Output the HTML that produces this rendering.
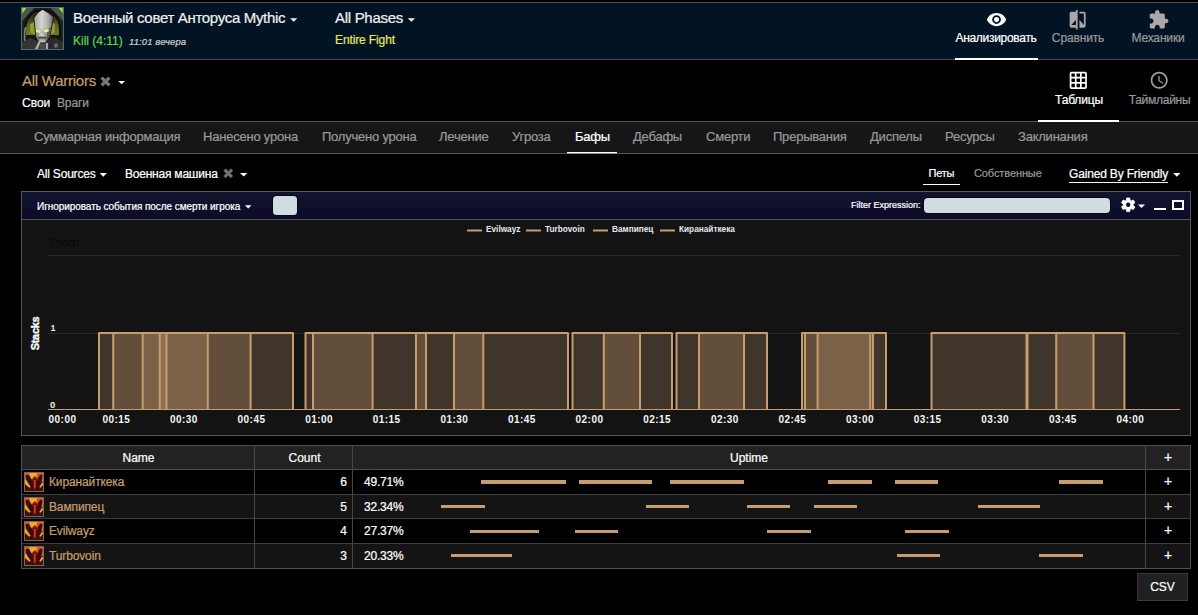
<!DOCTYPE html>
<html style="background:#000">
<head>
<meta charset="utf-8">
<title>Report</title>
<style>
*{box-sizing:border-box;margin:0;padding:0}
html,body{width:1198px;height:615px;overflow:hidden;background:#000}
body{font-family:"Liberation Sans",sans-serif;color:#fff;position:relative;font-size:12px;-webkit-text-stroke:0.22px}
.abs{position:absolute;white-space:nowrap;line-height:1}
.caret{display:inline-block;width:7.300px;height:3.600px;background:currentColor;clip-path:polygon(0 0,100% 0,50% 100%);vertical-align:middle}
#topbar{position:absolute;left:0;top:2px;width:1198px;height:58px;background:linear-gradient(#050e18 0,#021323 2px,#021323 100%);border-top:1px solid #4d5058;border-bottom:1px solid #4a4c52}
#sec2{position:absolute;left:0;top:60px;width:1198px;height:62px;background:#000;border-bottom:1px solid #565656}
#tabbar{position:absolute;left:0;top:122px;width:1198px;height:32px;background:#161616;border-bottom:1px solid #565656}
.tab{position:absolute;top:129px;font-size:13px;color:#999;white-space:nowrap;line-height:16px;letter-spacing:-0.22px}
#panel{position:absolute;left:21px;top:191px;width:1170px;height:245px;border:1px solid #58585c;border-top-color:#5a5a64;background:#131313}
#phead{position:absolute;left:0;top:0;width:1168px;height:28px;background:linear-gradient(#12142f,#0c0b27);border-bottom:1px solid #55555f}
.tbl{position:absolute;left:21px;top:445px;width:1170px;height:124px;border:1px solid #505050}
.row{position:absolute;left:0;width:1168px}
.vline{position:absolute;top:0;width:1px;height:122px;background:#464646}
.hline{position:absolute;left:0;width:1168px;height:1px;background:#404040}
.nm{position:absolute;left:27px;font-size:12px;color:#c79c6e;white-space:nowrap;line-height:14px;letter-spacing:-0.13px}
.cnt{position:absolute;left:234px;width:91px;text-align:right;font-size:12px;line-height:14px}
.pct{position:absolute;left:342px;font-size:12px;line-height:14px;letter-spacing:-0.2px}
.plus{position:absolute;left:1124px;width:44px;text-align:center;font-size:14px;line-height:14px}
.ub{position:absolute;height:4px;background:#c79c6e}
</style>
</head>
<body>

<!-- top bar -->
<div id="topbar"></div>
<svg class="abs" style="left:21px;top:7px" width="43" height="43" viewBox="0 0 43 43">
  <defs>
    <filter id="bl" x="-10%" y="-10%" width="120%" height="120%"><feGaussianBlur stdDeviation="0.650"/></filter>
    <clipPath id="bc"><rect x="1" y="1" width="41" height="41"/></clipPath>
    <linearGradient id="hd" x1="0" y1="0" x2="1" y2="0"><stop offset="0" stop-color="#a3a7a2"/><stop offset="0.400" stop-color="#d4d8d2"/><stop offset="0.750" stop-color="#a9aca8"/><stop offset="1" stop-color="#6a6770"/></linearGradient>
    <linearGradient id="ar" x1="0" y1="0" x2="0" y2="1"><stop offset="0" stop-color="#35240f"/><stop offset="0.300" stop-color="#453616"/><stop offset="0.550" stop-color="#5a6420"/><stop offset="1" stop-color="#6e8028"/></linearGradient>
    <linearGradient id="fc" x1="0" y1="0" x2="0" y2="1"><stop offset="0" stop-color="#000" stop-opacity="0"/><stop offset="0.550" stop-color="#000" stop-opacity="0"/><stop offset="1" stop-color="#000" stop-opacity="0.450"/></linearGradient>
  </defs>
  <rect x="0" y="0" width="43" height="43" fill="#2a322e"/>
  <g clip-path="url(#bc)"><g filter="url(#bl)">
    <rect x="0" y="0" width="43" height="43" fill="#1c211c"/><path d="M0 0 h14 L0 15z M43 0 h-14 L43 15z" fill="#4a5a4e"/>
    <path d="M0 0 h6 l-4.500 6 h-1.500z" fill="#8fc21e"/>
    <path d="M43 0 h-6 l4.500 6 h1.500z" fill="#8fc21e"/>
    <path d="M2.500 1 l2.500 0 l-3 4z M40.500 1 l-2.500 0 l3 4z" fill="#b4e040"/>
    <path d="M3 43 L3 22 C3.500 9 11 2 21.500 2 C32 2 39.500 9 40 22 L40 43 Z" fill="#0c0e0a"/>
    <path d="M5 30 L5 22 C5.500 11 12 4 21.500 4 C31 4 37.500 11 38 22 L38 30 Z" fill="url(#ar)"/>
    <path d="M6 28 L14 28 L14 43 L3 43 L3 30 Z M37 28 L29 28 L29 43 L40 43 L40 30Z" fill="#16180f"/>
    <path d="M9 17 L13.500 15 L14 27.500 L9.500 25.500 Z" fill="#8da234"/>
    <path d="M34 17 L29.500 15 L29 27.500 L33.500 25.500 Z" fill="#8da234"/>
    <path d="M4.500 20 C3 27 3.500 36 6.500 42" fill="none" stroke="#6e8486" stroke-width="1.600"/>
    <path d="M0 43 L0 36 L9 31 L16 33.500 L27 33.500 L34 31 L43 36 L43 43 Z" fill="#343635"/>
    <path d="M28 29 L31 31 L31 43 L27.500 43 Z" fill="#2a2230"/>
    <path d="M31 32 L41 35 L41 43 L31 43 Z" fill="#2b2d2c"/>
    <path d="M33 37 l3 -1 l1 4 l-3 1z" fill="#6b6d66"/>
    <path d="M16.500 5 L21.500 1.800 L27.500 5 L33 9.500 L32 16 L30.800 22 L29 30 L25.500 36 L17.500 36 L14.200 30 L13.500 22 L12.300 10.500 Z" fill="#14140c" opacity="0.850"/>
    <path d="M17 6 L21.500 2.800 L27 6 L32 10 L31 16 L29.800 22 L28 30 L25 35 L18 35 L15.200 30 L14.500 22 L13.300 11 Z" fill="url(#hd)"/>
    <path d="M17 6 L21.500 2.800 L27 6 L32 10 L31 16 L29.800 22 L28 30 L25 35 L18 35 L15.200 30 L14.500 22 L13.300 11 Z" fill="url(#fc)"/>
    <path d="M26.500 22 L30 20 L28 30 L25.500 34 Z" fill="#4d4754" opacity="0.800"/>
    <path d="M14.800 22.300 l5 1.300 l-0.800 2.300 l-4 -0.900z" fill="#dff07a"/>
    <path d="M27.800 21.800 l-5 1.500 l0.900 2.300 l4 -1z" fill="#e6f2a0"/>
    <path d="M19 26 h3.500 l1.200 3 h-5.700z" fill="#c4c8c4"/>
    <path d="M17.500 30 h7.500 v1.300 h-7.500z" fill="#3e4142"/>
    <path d="M18.500 32.500 h5.500 l0.800 3 h-7z" fill="#b4b9b4"/>
    <path d="M17.500 34.500 L19.500 35.500 L16.500 43 L13.500 43 Z M25 36 L27 36 L27 43 L25 43 Z" fill="#a8aca6"/>
    <path d="M19 37 h6 v6 h-6z" fill="#4a4c50"/>
  </g></g>
  <rect x="0.500" y="0.500" width="42" height="42" fill="none" stroke="#5c666c"/>
</svg>
<div class="abs" style="left:73px;top:10px;font-size:15px;color:#f0f0f0;letter-spacing:-0.32px">Военный совет Анторуса Mythic <span class="caret" style="margin-left:1px;position:relative;top:1px"></span></div>
<div class="abs" style="left:73px;top:35px;font-size:12px;color:#5fd94a">Kill (4:11)</div>
<div class="abs" style="left:129px;top:37px;font-size:9.500px;color:#d0d0d0;font-style:italic;letter-spacing:0.1px">11:01 вечера</div>
<div class="abs" style="left:335px;top:10px;font-size:15px;color:#f0f0f0;letter-spacing:-0.3px">All Phases <span class="caret" style="margin-left:1px;position:relative;top:1px"></span></div>
<div class="abs" style="left:335px;top:34px;font-size:12px;color:#e6e85c;letter-spacing:-0.12px">Entire Fight</div>

<!-- top right nav -->
<svg class="abs" style="left:985.6px;top:8.9px" width="21.1" height="21.1" viewBox="0 0 24 24"><path fill="#fff" d="M12 4.500C7 4.500 2.730 7.610 1 12c1.730 4.390 6 7.500 11 7.500s9.270-3.110 11-7.500c-1.730-4.390-6-7.500-11-7.500zM12 17c-2.760 0-5-2.240-5-5s2.240-5 5-5 5 2.240 5 5-2.240 5-5 5zm0-8c-1.660 0-3 1.340-3 3s1.340 3 3 3 3-1.340 3-3-1.340-3-3-3z"/></svg>
<div class="abs" style="left:954px;top:32px;width:84px;text-align:center;font-size:12px;color:#fff;letter-spacing:-0.3px">Анализировать</div>
<div class="abs" style="left:955px;top:58px;width:83px;height:2px;background:#fff"></div>
<svg class="abs" style="left:1067.3px;top:9.1px" width="21.3" height="21.3" viewBox="0 0 24 24"><path fill="#a8a8a8" d="M10 3H5c-1.100 0-2 .9-2 2v14c0 1.100.9 2 2 2h5v2h2V1h-2v2zm0 15H5l5-6v6zm9-15h-5v2h5v13l-5-6v9h5c1.100 0 2-.9 2-2V5c0-1.100-.9-2-2-2z"/></svg>
<div class="abs" style="left:1038px;top:32px;width:80px;text-align:center;font-size:12px;color:#999;letter-spacing:-0.15px">Сравнить</div>
<svg class="abs" style="left:1147.9px;top:9.1px" width="21.3" height="21.3" viewBox="0 0 24 24"><path fill="#a8a8a8" d="M20.500 11H19V7c0-1.100-.9-2-2-2h-4V3.500C13 2.120 11.880 1 10.500 1S8 2.120 8 3.500V5H4c-1.100 0-1.990.9-1.990 2v3.800H3.500c1.490 0 2.700 1.210 2.700 2.700s-1.210 2.700-2.700 2.700H2V20c0 1.100.9 2 2 2h3.800v-1.500c0-1.490 1.210-2.700 2.700-2.700 1.490 0 2.700 1.210 2.700 2.700V22H17c1.100 0 2-.9 2-2v-4h1.500c1.380 0 2.500-1.120 2.500-2.500S21.880 11 20.500 11z"/></svg>
<div class="abs" style="left:1118px;top:32px;width:80px;text-align:center;font-size:12px;color:#999;letter-spacing:-0.15px">Механики</div>

<!-- second bar -->
<div id="sec2"></div>
<div class="abs" style="left:22px;top:73px;font-size:15px;color:#c79c6e;letter-spacing:-0.25px">All Warriors</div>
<svg class="abs" style="left:100px;top:76px" width="11" height="11" viewBox="0 0 11 11"><path d="M1.600 1.600 L9.400 9.400 M9.400 1.600 L1.600 9.400" stroke="#787878" stroke-width="3.300" stroke-linecap="butt"/></svg>
<div class="abs caret" style="left:118px;top:80.700px;color:#fff"></div>
<div class="abs" style="left:22px;top:97px;font-size:12px;color:#fff">Свои</div>
<div class="abs" style="left:57px;top:97px;font-size:12px;color:#999;letter-spacing:-0.15px">Враги</div>

<svg class="abs" style="left:1067.9px;top:70.0px" width="20.6" height="20.6" viewBox="0 0 24 24"><path fill="#fff" d="M20 2H4c-1.100 0-2 .9-2 2v16c0 1.100.9 2 2 2h16c1.100 0 2-.9 2-2V4c0-1.100-.9-2-2-2zM8 20H4v-4h4v4zm0-6H4v-4h4v4zm0-6H4V4h4v4zm6 12h-4v-4h4v4zm0-6h-4v-4h4v4zm0-6h-4V4h4v4zm6 12h-4v-4h4v4zm0-6h-4v-4h4v4zm0-6h-4V4h4v4z"/></svg>
<div class="abs" style="left:1039px;top:94px;width:80px;text-align:center;font-size:12px;color:#fff;letter-spacing:-0.15px">Таблицы</div>
<div class="abs" style="left:1038px;top:120px;width:81px;height:2px;background:#fff"></div>
<svg class="abs" style="left:1149.1px;top:70.0px" width="20.4" height="20.4" viewBox="0 0 24 24"><path fill="#a0a0a0" d="M11.990 2C6.470 2 2 6.480 2 12s4.470 10 9.990 10C17.520 22 22 17.520 22 12S17.520 2 11.990 2zM12 20c-4.420 0-8-3.580-8-8s3.580-8 8-8 8 3.580 8 8-3.580 8-8 8zm.5-13H11v6l5.250 3.150.75-1.230-4.500-2.670z"/></svg>
<div class="abs" style="left:1119.500px;top:94px;width:80px;text-align:center;font-size:12px;color:#999;letter-spacing:-0.27px">Таймлайны</div>

<!-- tab bar -->
<div id="tabbar"></div>
<div class="tab" style="left:34px">Суммарная информация</div>
<div class="tab" style="left:203px">Нанесено урона</div>
<div class="tab" style="left:322px">Получено урона</div>
<div class="tab" style="left:439px">Лечение</div>
<div class="tab" style="left:512px">Угроза</div>
<div class="tab" style="left:575px;color:#fff">Бафы</div>
<div class="abs" style="left:567px;top:152px;width:50px;height:2px;background:linear-gradient(#fff 0,#fff 1px,#8c8c8c 1px,#8c8c8c 2px)"></div>
<div class="tab" style="left:633px">Дебафы</div>
<div class="tab" style="left:706px">Смерти</div>
<div class="tab" style="left:773px">Прерывания</div>
<div class="tab" style="left:870px">Диспелы</div>
<div class="tab" style="left:945px">Ресурсы</div>
<div class="tab" style="left:1018px">Заклинания</div>

<!-- filter row -->
<div class="abs" style="left:37px;top:168px;font-size:12px;color:#fff;letter-spacing:-0.2px">All Sources <span class="caret" style="margin-left:1px"></span></div>
<div class="abs" style="left:125px;top:168px;font-size:12px;color:#fff;letter-spacing:-0.22px">Военная машина</div>
<svg class="abs" style="left:222.500px;top:167.700px" width="10.600" height="10.600" viewBox="0 0 11 11"><path d="M1.600 1.600 L9.400 9.400 M9.400 1.600 L1.600 9.400" stroke="#707070" stroke-width="3.300" stroke-linecap="butt"/></svg>
<div class="abs caret" style="left:240px;top:173px;color:#fff"></div>
<div class="abs" style="left:928.600px;top:168px;font-size:11px;color:#fff;letter-spacing:-0.3px">Петы</div>
<div class="abs" style="left:923px;top:184px;width:37px;height:1px;background:#fff"></div>
<div class="abs" style="left:974px;top:168px;font-size:11px;color:#999;letter-spacing:-0.1px">Собственные</div>
<div class="abs" style="left:1069px;top:168px;font-size:12px;color:#fff;letter-spacing:-0.17px">Gained By Friendly <span class="caret" style="margin-left:2px"></span></div>
<div class="abs" style="left:1069px;top:182px;width:99px;height:1px;background:#f4f4f4"></div>

<!-- chart panel -->
<div id="panel">
  <div id="phead"></div>
  <div class="abs" style="left:15px;top:9.600px;font-size:10px;color:#fff;letter-spacing:-0.06px">Игнорировать события после смерти игрока <span class="caret" style="width:6.500px;height:3.300px;margin-left:2px"></span></div>
  <div class="abs" style="left:251px;top:4px;width:24px;height:19px;background:#cfdde0;border-radius:3.500px;box-shadow:0 0 0 1px #06061c"></div>
  <div class="abs" style="left:829px;top:9px;font-size:9px;color:#fff">Filter Expression:</div>
  <div class="abs" style="left:902px;top:6px;width:186px;height:15px;background:#cfdde0;border-radius:4px;box-shadow:0 0 0 1px #06061c"></div>
  <svg class="abs" style="left:1096px;top:3px" width="32" height="20" viewBox="0 0 32 20"><g transform="translate(10.200,9.800)"><path d="M1.79 -4.67 L1.57 -6.82 L-1.57 -6.82 L-1.79 -4.67 L-3.15 -3.89 L-5.12 -4.77 L-6.69 -2.05 L-4.94 -0.78 L-4.94 0.78 L-6.69 2.05 L-5.12 4.77 L-3.15 3.89 L-1.79 4.67 L-1.57 6.82 L1.57 6.82 L1.79 4.67 L3.15 3.89 L5.12 4.77 L6.69 2.05 L4.94 0.78 L4.94 -0.78 L6.69 -2.05 L5.12 -4.77 L3.15 -3.89Z" fill="#fff" stroke="#fff" stroke-width="0.800" stroke-linejoin="round"/><circle r="2.200" fill="#0e0e2a"/></g><path d="M20 9.600 h7 l-3.500 3.500 z" fill="#fff"/></svg>
  <div class="abs" style="left:1132px;top:16px;width:12px;height:2px;background:#fff"></div>
  <div class="abs" style="left:1150px;top:8px;width:12px;height:10px;border:2px solid #fff"></div>

  <svg class="abs" style="left:0;top:28px" width="1168" height="215" viewBox="22 220 1168 215" id="chart">
<rect x="48" y="255" width="1132" height="1" fill="#2a2a2a"/>
<rect x="48" y="333" width="1132" height="1" fill="#2a2a2a"/>
<text x="48" y="247" font-size="12" fill="#090909" font-family="Liberation Sans">Zoom</text>
<rect x="159.7" y="333" width="133.3" height="76.5" fill="#c79c6e" fill-opacity="0.25"/>
<rect x="313" y="333" width="113.0" height="76.5" fill="#c79c6e" fill-opacity="0.25"/>
<rect x="454" y="333" width="114.0" height="76.5" fill="#c79c6e" fill-opacity="0.25"/>
<rect x="699" y="333" width="68.0" height="76.5" fill="#c79c6e" fill-opacity="0.25"/>
<rect x="802" y="333" width="68.2" height="76.5" fill="#c79c6e" fill-opacity="0.25"/>
<rect x="1056.2" y="333" width="68.2" height="76.5" fill="#c79c6e" fill-opacity="0.25"/>
<rect x="99" y="333" width="67.5" height="76.5" fill="#c79c6e" fill-opacity="0.25"/>
<rect x="416" y="333" width="67.3" height="76.5" fill="#c79c6e" fill-opacity="0.25"/>
<rect x="572.5" y="333" width="67.5" height="76.5" fill="#c79c6e" fill-opacity="0.25"/>
<rect x="676.5" y="333" width="67.5" height="76.5" fill="#c79c6e" fill-opacity="0.25"/>
<rect x="931.5" y="333" width="95.0" height="76.5" fill="#c79c6e" fill-opacity="0.25"/>
<rect x="142.7" y="333" width="107.9" height="76.5" fill="#c79c6e" fill-opacity="0.25"/>
<rect x="305.5" y="333" width="67.1" height="76.5" fill="#c79c6e" fill-opacity="0.25"/>
<rect x="603.8" y="333" width="68.2" height="76.5" fill="#c79c6e" fill-opacity="0.25"/>
<rect x="817.6" y="333" width="68.4" height="76.5" fill="#c79c6e" fill-opacity="0.25"/>
<rect x="113.2" y="333" width="94.6" height="76.5" fill="#c79c6e" fill-opacity="0.25"/>
<rect x="805" y="333" width="68.0" height="76.5" fill="#c79c6e" fill-opacity="0.25"/>
<rect x="1027.5" y="333" width="66.0" height="76.5" fill="#c79c6e" fill-opacity="0.25"/>
<rect x="48" y="409" width="1132" height="1" fill="#c79c6e"/>
<path d="M159.7 410 V333 H293 V410 M313 410 V333 H426 V410 M454 410 V333 H568 V410 M699 410 V333 H767 V410 M802 410 V333 H870.2 V410 M1056.2 410 V333 H1124.4 V410" fill="none" stroke="#c79c6e" stroke-width="2" stroke-linejoin="round"/>
<path d="M99 410 V333 H166.5 V410 M416 410 V333 H483.3 V410 M572.5 410 V333 H640 V410 M676.5 410 V333 H744 V410 M931.5 410 V333 H1026.5 V410" fill="none" stroke="#c79c6e" stroke-width="2" stroke-linejoin="round"/>
<path d="M142.7 410 V333 H250.6 V410 M305.5 410 V333 H372.6 V410 M603.8 410 V333 H672 V410 M817.6 410 V333 H886 V410" fill="none" stroke="#c79c6e" stroke-width="2" stroke-linejoin="round"/>
<path d="M113.2 410 V333 H207.8 V410 M805 410 V333 H873 V410 M1027.5 410 V333 H1093.5 V410" fill="none" stroke="#c79c6e" stroke-width="2" stroke-linejoin="round"/>
<rect x="467" y="229.500" width="15" height="2" fill="#c79c6e"/>
<text x="486" y="232" font-size="8.250" font-weight="bold" fill="#e6eaf2" font-family="Liberation Sans">Evilwayz</text>
<rect x="526" y="229.500" width="15" height="2" fill="#c79c6e"/>
<text x="545" y="232" font-size="8.250" font-weight="bold" fill="#e6eaf2" font-family="Liberation Sans">Turbovoin</text>
<rect x="593" y="229.500" width="15" height="2" fill="#c79c6e"/>
<text x="612" y="232" font-size="8.250" font-weight="bold" fill="#e6eaf2" font-family="Liberation Sans">Вампипец</text>
<rect x="660" y="229.500" width="15" height="2" fill="#c79c6e"/>
<text x="679" y="232" font-size="8.250" font-weight="bold" fill="#e6eaf2" font-family="Liberation Sans">Киранайткека</text>
<text x="50.500" y="331" font-size="9" font-weight="bold" fill="#d8efe6" font-family="Liberation Sans">1</text>
<text x="50" y="408" font-size="9.500" font-weight="bold" fill="#f0f4f4" font-family="Liberation Sans">0</text>
<text transform="translate(39,333.500) rotate(-90)" text-anchor="middle" font-size="11" font-weight="bold" fill="#fff" stroke="#fff" stroke-width="0.350" letter-spacing="-0.35" font-family="Liberation Sans">Stacks</text>
<text x="62.5" y="423" text-anchor="middle" font-size="10" font-weight="bold" fill="#f4f8f8" letter-spacing="0.45" font-family="Liberation Sans">00:00</text>
<rect x="115.1" y="410" width="1" height="3" fill="#242424"/>
<text x="116.3" y="423" text-anchor="middle" font-size="10" font-weight="bold" fill="#f4f8f8" letter-spacing="0.45" font-family="Liberation Sans">00:15</text>
<rect x="182.7" y="410" width="1" height="3" fill="#242424"/>
<text x="183.9" y="423" text-anchor="middle" font-size="10" font-weight="bold" fill="#f4f8f8" letter-spacing="0.45" font-family="Liberation Sans">00:30</text>
<rect x="250.3" y="410" width="1" height="3" fill="#242424"/>
<text x="251.5" y="423" text-anchor="middle" font-size="10" font-weight="bold" fill="#f4f8f8" letter-spacing="0.45" font-family="Liberation Sans">00:45</text>
<rect x="317.9" y="410" width="1" height="3" fill="#242424"/>
<text x="319.1" y="423" text-anchor="middle" font-size="10" font-weight="bold" fill="#f4f8f8" letter-spacing="0.45" font-family="Liberation Sans">01:00</text>
<rect x="385.5" y="410" width="1" height="3" fill="#242424"/>
<text x="386.7" y="423" text-anchor="middle" font-size="10" font-weight="bold" fill="#f4f8f8" letter-spacing="0.45" font-family="Liberation Sans">01:15</text>
<rect x="453.1" y="410" width="1" height="3" fill="#242424"/>
<text x="454.3" y="423" text-anchor="middle" font-size="10" font-weight="bold" fill="#f4f8f8" letter-spacing="0.45" font-family="Liberation Sans">01:30</text>
<rect x="520.7" y="410" width="1" height="3" fill="#242424"/>
<text x="521.9" y="423" text-anchor="middle" font-size="10" font-weight="bold" fill="#f4f8f8" letter-spacing="0.45" font-family="Liberation Sans">01:45</text>
<rect x="588.3" y="410" width="1" height="3" fill="#242424"/>
<text x="589.5" y="423" text-anchor="middle" font-size="10" font-weight="bold" fill="#f4f8f8" letter-spacing="0.45" font-family="Liberation Sans">02:00</text>
<rect x="655.9" y="410" width="1" height="3" fill="#242424"/>
<text x="657.1" y="423" text-anchor="middle" font-size="10" font-weight="bold" fill="#f4f8f8" letter-spacing="0.45" font-family="Liberation Sans">02:15</text>
<rect x="723.5" y="410" width="1" height="3" fill="#242424"/>
<text x="724.8" y="423" text-anchor="middle" font-size="10" font-weight="bold" fill="#f4f8f8" letter-spacing="0.45" font-family="Liberation Sans">02:30</text>
<rect x="791.2" y="410" width="1" height="3" fill="#242424"/>
<text x="792.4" y="423" text-anchor="middle" font-size="10" font-weight="bold" fill="#f4f8f8" letter-spacing="0.45" font-family="Liberation Sans">02:45</text>
<rect x="858.8" y="410" width="1" height="3" fill="#242424"/>
<text x="860.0" y="423" text-anchor="middle" font-size="10" font-weight="bold" fill="#f4f8f8" letter-spacing="0.45" font-family="Liberation Sans">03:00</text>
<rect x="926.4" y="410" width="1" height="3" fill="#242424"/>
<text x="927.6" y="423" text-anchor="middle" font-size="10" font-weight="bold" fill="#f4f8f8" letter-spacing="0.45" font-family="Liberation Sans">03:15</text>
<rect x="994.0" y="410" width="1" height="3" fill="#242424"/>
<text x="995.2" y="423" text-anchor="middle" font-size="10" font-weight="bold" fill="#f4f8f8" letter-spacing="0.45" font-family="Liberation Sans">03:30</text>
<rect x="1061.6" y="410" width="1" height="3" fill="#242424"/>
<text x="1062.8" y="423" text-anchor="middle" font-size="10" font-weight="bold" fill="#f4f8f8" letter-spacing="0.45" font-family="Liberation Sans">03:45</text>
<rect x="1129.2" y="410" width="1" height="3" fill="#242424"/>
<text x="1130.4" y="423" text-anchor="middle" font-size="10" font-weight="bold" fill="#f4f8f8" letter-spacing="0.45" font-family="Liberation Sans">04:00</text>
  </svg>
</div>

<!-- table -->
<div class="tbl" id="tbl">
<svg width="0" height="0" style="position:absolute"><defs><filter id="wb" x="-10%" y="-10%" width="120%" height="120%"><feGaussianBlur stdDeviation="0.45"/></filter></defs></svg>
<div class="row" style="top:0;height:23px;background:#222"></div>
<div class="row" style="top:24px;height:24px;background:#000"></div>
<div class="row" style="top:49px;height:23px;background:#141414"></div>
<div class="row" style="top:73px;height:24px;background:#000"></div>
<div class="row" style="top:98px;height:24px;background:#141414"></div>
<div class="hline" style="top:23px;background:#4c4c4c"></div>
<div class="hline" style="top:48px;background:#3e3e3e"></div>
<div class="hline" style="top:72px;background:#3e3e3e"></div>
<div class="hline" style="top:97px;background:#3e3e3e"></div>
<div class="vline" style="left:232px"></div>
<div class="vline" style="left:330px"></div>
<div class="vline" style="left:1123px"></div>
<div class="abs" style="left:0;top:5px;width:233px;text-align:center;font-size:12px;line-height:14px">Name</div>
<div class="abs" style="left:234px;top:5px;width:97px;text-align:center;font-size:12px;line-height:14px">Count</div>
<div class="abs" style="left:331px;top:5px;width:792px;text-align:center;font-size:12px;line-height:14px">Uptime</div>
<div class="plus" style="top:4px">+</div>
<svg class="abs" style="left:2px;top:26px" width="20" height="20" viewBox="0 0 20 20"><rect width="20" height="20" fill="#4a0d08"/><g filter="url(#wb)"><rect x="1" y="1" width="18" height="18" fill="#4a100a"/><path d="M1 1 h18 v9 h-18z" fill="#e0581a"/><path d="M5 1 h8 l-1 5 l-2.500 3 l-3 -3z" fill="#f8a62c"/><path d="M1.500 3.500 L4.500 2.500 L8 8 L10.500 4.500 L13 8 L16 2.500 L18.500 3.500 L17.500 9 L14.500 17 L5.500 17 L2.500 9 Z" fill="#380a08"/><path d="M7.500 7.500 L10.700 4.300 L14.500 7.500 L13 9 L10.700 6.500 L8.800 9Z" fill="#8a1e0e"/><path d="M9.700 8 h2.200 v10 h-2.200z" fill="#cc3419"/><path d="M1 7.500 L2.500 8.500 L6.800 15 L5.200 15.800 L1 12 Z" fill="#f2a432"/><path d="M19 10.500 L17.800 11 L15.300 15 L16.500 15.800 L19 13 Z" fill="#f2a432"/><path d="M1 16.500 h18 v2.500 h-18z" fill="#4a0f09"/></g><rect x="0.500" y="0.500" width="19" height="19" fill="none" stroke="#77685a"/></svg>
<div class="nm" style="top:29px">Киранайткека</div>
<div class="cnt" style="top:29px">6</div>
<div class="pct" style="top:29px">49.71%</div>
<div class="plus" style="top:28px">+</div>
<div class="ub" style="left:459.0px;top:34px;width:85.0px;height:4px"></div>
<div class="ub" style="left:557.2px;top:34px;width:72.6px;height:4px"></div>
<div class="ub" style="left:648.1px;top:34px;width:73.9px;height:4px"></div>
<div class="ub" style="left:805.9px;top:34px;width:44.1px;height:4px"></div>
<div class="ub" style="left:872.9px;top:34px;width:43.2px;height:4px"></div>
<div class="ub" style="left:1036.9px;top:34px;width:44.0px;height:4px"></div>
<svg class="abs" style="left:2px;top:51px" width="20" height="20" viewBox="0 0 20 20"><rect width="20" height="20" fill="#4a0d08"/><g filter="url(#wb)"><rect x="1" y="1" width="18" height="18" fill="#4a100a"/><path d="M1 1 h18 v9 h-18z" fill="#e0581a"/><path d="M5 1 h8 l-1 5 l-2.500 3 l-3 -3z" fill="#f8a62c"/><path d="M1.500 3.500 L4.500 2.500 L8 8 L10.500 4.500 L13 8 L16 2.500 L18.500 3.500 L17.500 9 L14.500 17 L5.500 17 L2.500 9 Z" fill="#380a08"/><path d="M7.500 7.500 L10.700 4.300 L14.500 7.500 L13 9 L10.700 6.500 L8.800 9Z" fill="#8a1e0e"/><path d="M9.700 8 h2.200 v10 h-2.200z" fill="#cc3419"/><path d="M1 7.500 L2.500 8.500 L6.800 15 L5.200 15.800 L1 12 Z" fill="#f2a432"/><path d="M19 10.500 L17.800 11 L15.300 15 L16.500 15.800 L19 13 Z" fill="#f2a432"/><path d="M1 16.500 h18 v2.500 h-18z" fill="#4a0f09"/></g><rect x="0.500" y="0.500" width="19" height="19" fill="none" stroke="#77685a"/></svg>
<div class="nm" style="top:54px">Вампипец</div>
<div class="cnt" style="top:54px">5</div>
<div class="pct" style="top:54px">32.34%</div>
<div class="plus" style="top:53px">+</div>
<div class="ub" style="left:419.0px;top:59px;width:43.8px;height:3px"></div>
<div class="ub" style="left:624.1px;top:59px;width:42.8px;height:3px"></div>
<div class="ub" style="left:725.0px;top:59px;width:42.8px;height:3px"></div>
<div class="ub" style="left:792.1px;top:59px;width:42.9px;height:3px"></div>
<div class="ub" style="left:956.2px;top:59px;width:61.6px;height:3px"></div>
<svg class="abs" style="left:2px;top:75px" width="20" height="20" viewBox="0 0 20 20"><rect width="20" height="20" fill="#4a0d08"/><g filter="url(#wb)"><rect x="1" y="1" width="18" height="18" fill="#4a100a"/><path d="M1 1 h18 v9 h-18z" fill="#e0581a"/><path d="M5 1 h8 l-1 5 l-2.500 3 l-3 -3z" fill="#f8a62c"/><path d="M1.500 3.500 L4.500 2.500 L8 8 L10.500 4.500 L13 8 L16 2.500 L18.500 3.500 L17.500 9 L14.500 17 L5.500 17 L2.500 9 Z" fill="#380a08"/><path d="M7.500 7.500 L10.700 4.300 L14.500 7.500 L13 9 L10.700 6.500 L8.800 9Z" fill="#8a1e0e"/><path d="M9.700 8 h2.200 v10 h-2.200z" fill="#cc3419"/><path d="M1 7.500 L2.500 8.500 L6.800 15 L5.200 15.800 L1 12 Z" fill="#f2a432"/><path d="M19 10.500 L17.800 11 L15.300 15 L16.500 15.800 L19 13 Z" fill="#f2a432"/><path d="M1 16.500 h18 v2.500 h-18z" fill="#4a0f09"/></g><rect x="0.500" y="0.500" width="19" height="19" fill="none" stroke="#77685a"/></svg>
<div class="nm" style="top:78px">Evilwayz</div>
<div class="cnt" style="top:78px">4</div>
<div class="pct" style="top:78px">27.37%</div>
<div class="plus" style="top:77px">+</div>
<div class="ub" style="left:448.2px;top:83.5px;width:68.8px;height:3.2px"></div>
<div class="ub" style="left:553.4px;top:83.5px;width:42.6px;height:3.2px"></div>
<div class="ub" style="left:745.0px;top:83.5px;width:44.1px;height:3.2px"></div>
<div class="ub" style="left:882.9px;top:83.5px;width:44.0px;height:3.2px"></div>
<svg class="abs" style="left:2px;top:100px" width="20" height="20" viewBox="0 0 20 20"><rect width="20" height="20" fill="#4a0d08"/><g filter="url(#wb)"><rect x="1" y="1" width="18" height="18" fill="#4a100a"/><path d="M1 1 h18 v9 h-18z" fill="#e0581a"/><path d="M5 1 h8 l-1 5 l-2.500 3 l-3 -3z" fill="#f8a62c"/><path d="M1.500 3.500 L4.500 2.500 L8 8 L10.500 4.500 L13 8 L16 2.500 L18.500 3.500 L17.500 9 L14.500 17 L5.500 17 L2.500 9 Z" fill="#380a08"/><path d="M7.500 7.500 L10.700 4.300 L14.500 7.500 L13 9 L10.700 6.500 L8.800 9Z" fill="#8a1e0e"/><path d="M9.700 8 h2.200 v10 h-2.200z" fill="#cc3419"/><path d="M1 7.500 L2.500 8.500 L6.800 15 L5.200 15.800 L1 12 Z" fill="#f2a432"/><path d="M19 10.500 L17.800 11 L15.300 15 L16.500 15.800 L19 13 Z" fill="#f2a432"/><path d="M1 16.500 h18 v2.500 h-18z" fill="#4a0f09"/></g><rect x="0.500" y="0.500" width="19" height="19" fill="none" stroke="#77685a"/></svg>
<div class="nm" style="top:103px">Turbovoin</div>
<div class="cnt" style="top:103px">3</div>
<div class="pct" style="top:103px">20.33%</div>
<div class="plus" style="top:102px">+</div>
<div class="ub" style="left:429.0px;top:108px;width:60.8px;height:3px"></div>
<div class="ub" style="left:874.9px;top:108px;width:43.1px;height:3px"></div>
<div class="ub" style="left:1017.0px;top:108px;width:43.7px;height:3px"></div>
</div>

<!-- CSV -->
<div class="abs" style="left:1137px;top:573px;width:51px;height:28px;background:#202020;border:1px solid #3a3a3a;font-size:12px;color:#fff;text-align:center;line-height:26px">CSV</div>

</body>
</html>
